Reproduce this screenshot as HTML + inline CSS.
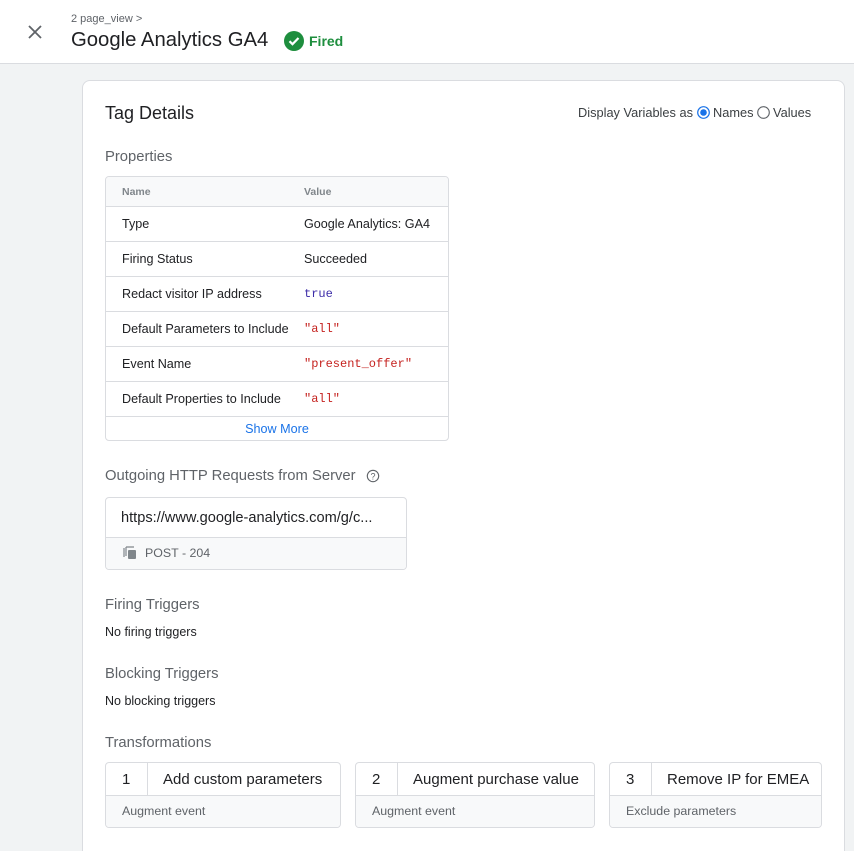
<!DOCTYPE html>
<html><head><style>
*{box-sizing:border-box;margin:0;padding:0}
html,body{width:854px;height:851px;overflow:hidden}
body{background:#f1f3f4;font-family:"Liberation Sans",sans-serif;color:#202124;position:relative}
.a{position:absolute;white-space:nowrap}
.hdr{position:absolute;left:0;top:0;width:854px;height:64px;background:#fff;border-bottom:1px solid #dadce0}
.card{position:absolute;left:82px;top:80px;width:763px;height:790px;background:#fff;border:1px solid #dadce0;border-radius:8px}
.sec{font-size:14.8px;color:#5f6368}
.t{font-size:12.5px}
.tbl{position:absolute;left:105px;top:176px;width:344px;height:265px;border:1px solid #dadce0;border-radius:4px;overflow:hidden}
.row{position:absolute;left:0;width:342px;height:35px;border-top:1px solid #dadce0;font-size:12.6px}
.row span{position:absolute;top:10px}
.mono{font-family:"Liberation Mono",monospace;color:#c5221f;font-size:12px}
.box{position:absolute;top:762px;height:66px;border:1px solid #dadce0;border-radius:4px;overflow:hidden}
.box .top{height:33px;border-bottom:1px solid #dadce0;position:relative;font-size:15px}
.box .bot{background:#f8f9fa;height:33px;font-size:12.4px;color:#5f6368;padding:8px 0 0 16px}
.box .n{position:absolute;left:16px;top:8px}
.box .d{position:absolute;left:41px;top:0;height:32px;border-left:1px solid #dadce0}
.box .l{position:absolute;top:8px}
</style></head><body>
<div class="hdr">
<svg class="a" style="left:27px;top:24px" width="16" height="16" viewBox="0 0 16 16"><path d="M2 2L14 14M14 2L2 14" stroke="#5f6368" stroke-width="1.8"/></svg>
<div class="a" style="left:71px;top:13px;font-size:11px;color:#5f6368">2 page_view &gt;</div>
<div class="a" style="left:71px;top:29px;font-size:20.3px;color:#202124">Google Analytics GA4</div>
<svg class="a" style="left:284px;top:31px" width="20" height="20" viewBox="0 0 20 20"><circle cx="10" cy="10" r="10" fill="#1e8e3e"/><path d="M5.5 10.2l3 3 6-6.2" stroke="#fff" stroke-width="2.2" fill="none"/></svg>
<div class="a" style="left:309px;top:33px;font-size:14px;color:#1e8e3e;font-weight:bold">Fired</div>
</div>
<div class="card"></div>
<div class="a" style="left:105px;top:103px;font-size:18px">Tag Details</div>
<div class="a" style="left:578px;top:105px;font-size:12.8px;color:#3c4043">Display Variables as</div>
<svg class="a" style="left:697px;top:106px" width="13" height="13"><circle cx="6.5" cy="6.5" r="5.8" stroke="#1a73e8" stroke-width="1.2" fill="none"/><circle cx="6.5" cy="6.5" r="3.3" fill="#1a73e8"/></svg>
<div class="a" style="left:713px;top:105px;font-size:12.8px;color:#3c4043">Names</div>
<svg class="a" style="left:757px;top:106px" width="13" height="13"><circle cx="6.5" cy="6.5" r="5.8" stroke="#5f6368" stroke-width="1.1" fill="none"/></svg>
<div class="a" style="left:773px;top:105px;font-size:12.8px;color:#3c4043">Values</div>
<div class="a sec" style="left:105px;top:149px">Properties</div>
<div class="tbl">
<div class="row" style="top:0;height:30px;border-top:none;background:#f8f9fa;color:#80868b;font-size:10.5px;font-weight:bold"><span style="left:16px;top:9px">Name</span><span style="left:198px;top:9px">Value</span></div>
<div class="row" style="top:29px"><span style="left:16px">Type</span><span style="left:198px">Google Analytics: GA4</span></div>
<div class="row" style="top:64px"><span style="left:16px">Firing Status</span><span style="left:198px">Succeeded</span></div>
<div class="row" style="top:99px"><span style="left:16px">Redact visitor IP address</span><span class="mono" style="left:198px;color:#3c2ca8">true</span></div>
<div class="row" style="top:134px"><span style="left:16px">Default Parameters to Include</span><span class="mono" style="left:198px">"all"</span></div>
<div class="row" style="top:169px"><span style="left:16px">Event Name</span><span class="mono" style="left:198px">"present_offer"</span></div>
<div class="row" style="top:204px"><span style="left:16px">Default Properties to Include</span><span class="mono" style="left:198px">"all"</span></div>
<div class="row" style="top:239px;height:25px"><span style="left:0;width:342px;text-align:center;top:5px;color:#1a73e8">Show More</span></div>
</div>
<div class="a sec" style="left:105px;top:468px">Outgoing HTTP Requests from Server</div>
<svg class="a" style="left:366px;top:469px" width="14" height="14"><circle cx="7" cy="7" r="5.7" stroke="#5f6368" stroke-width="1.1" fill="none"/><text x="7" y="10.3" font-size="9" text-anchor="middle" fill="#5f6368" font-family="Liberation Sans">?</text></svg>
<div class="a" style="left:105px;top:497px;width:302px;height:73px;border:1px solid #dadce0;border-radius:4px;overflow:hidden">
<div style="height:40px;border-bottom:1px solid #dadce0;font-size:14.6px;padding:12px 0 0 15px">https://www.google-analytics.com/g/c...</div>
<div style="background:#f8f9fa;height:33px;font-size:12.4px;color:#5f6368;padding:8px 0 0 39px;position:relative">
<svg style="position:absolute;left:17px;top:8px" width="14" height="14"><path d="M1 2v9M3 1v9M3 1h8" stroke="#80868b" stroke-width="1.2" fill="none"/><rect x="5" y="4" width="8" height="9" rx="1" fill="#80868b"/></svg>POST - 204</div>
</div>
<div class="a sec" style="left:105px;top:597px">Firing Triggers</div>
<div class="a t" style="left:105px;top:625px">No firing triggers</div>
<div class="a sec" style="left:105px;top:666px">Blocking Triggers</div>
<div class="a t" style="left:105px;top:694px">No blocking triggers</div>
<div class="a sec" style="left:105px;top:735px">Transformations</div>
<div class="box" style="left:105px;width:236px"><div class="top"><span class="n">1</span><div class="d"></div><span class="l" style="left:57px">Add custom parameters</span></div><div class="bot">Augment event</div></div>
<div class="box" style="left:355px;width:240px"><div class="top"><span class="n">2</span><div class="d"></div><span class="l" style="left:57px">Augment purchase value</span></div><div class="bot">Augment event</div></div>
<div class="box" style="left:609px;width:213px"><div class="top"><span class="n">3</span><div class="d"></div><span class="l" style="left:57px">Remove IP for EMEA</span></div><div class="bot">Exclude parameters</div></div>
</body></html>
